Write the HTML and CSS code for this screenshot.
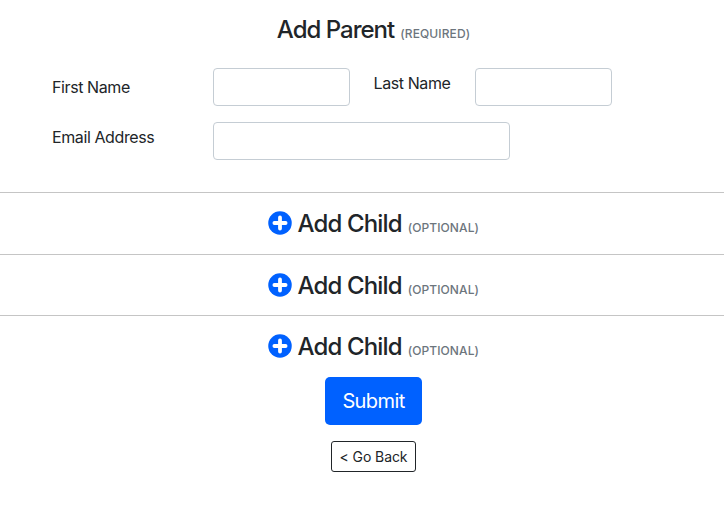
FILE: index.html
```
<!DOCTYPE html>
<html lang="en">

<head>
  <meta charset="UTF-8">
  <meta name="viewport" content="width=device-width, initial-scale=1.0">
  <title>Add Family</title>
  <link rel="stylesheet" href="styles.css">
</head>

<body>

  <form class="family-form">

    <!-- Parent -->
    <h4 class="section-title parent-title"><span>Add Parent</span> <small>(REQUIRED)</small></h4>
    <div class="parent-fields">
      <div class="form-row">
        <label class="first-label" for="firstName">First Name</label>
        <input type="text" id="firstName" class="form-control">
        <label class="last-label" for="lastName">Last Name</label>
        <input type="text" id="lastName" class="form-control">
      </div>
      <div class="form-row">
        <label class="email-label" for="email">Email Address</label>
        <input type="email" id="email" class="form-control email-control">
      </div>
    </div>

    <!-- Children -->
    <div class="child-section">
      <h4 class="section-title">
        <svg class="plus-icon" viewBox="0 0 24 24"><circle cx="12" cy="12" r="11.75"/><path d="M12 6.4v11.2M6.4 12h11.2"/></svg>
        <span>Add Child</span>
        <small>(OPTIONAL)</small>
      </h4>
    </div>
    <div class="child-section">
      <h4 class="section-title">
        <svg class="plus-icon" viewBox="0 0 24 24"><circle cx="12" cy="12" r="11.75"/><path d="M12 6.4v11.2M6.4 12h11.2"/></svg>
        <span>Add Child</span>
        <small>(OPTIONAL)</small>
      </h4>
    </div>
    <div class="child-section">
      <h4 class="section-title">
        <svg class="plus-icon" viewBox="0 0 24 24"><circle cx="12" cy="12" r="11.75"/><path d="M12 6.4v11.2M6.4 12h11.2"/></svg>
        <span>Add Child</span>
        <small>(OPTIONAL)</small>
      </h4>
    </div>

    <!-- Buttons -->
    <div class="actions">
      <button type="submit" class="btn-submit">Submit</button>
      <button type="button" class="btn-back">&lt; Go Back</button>
    </div>

  </form>

</body>

</html>
```

FILE: styles.css
```
* {
  box-sizing: border-box;
}

body {
  margin: 0;
  font-family: Inter, "Liberation Sans", sans-serif;
  font-size: 16px;
  line-height: 1.5;
  color: #212529;
  background: #fff;
}

/* Section titles */
.section-title {
  display: flex;
  justify-content: center;
  align-items: baseline;
  margin: 0;
  padding-left: 23px;
  font-size: 24px;
  font-weight: 500;
  line-height: 29px;
  letter-spacing: -0.85px;
  white-space: nowrap;
}

.section-title small {
  margin-left: 6px;
  font-size: 12px;
  font-weight: 500;
  line-height: 1;
  letter-spacing: 0.1px;
  color: #6c757d;
}

.parent-title {
  padding-top: 15px;
  letter-spacing: -1px;
}

/* Parent fields */
.parent-fields {
  display: flex;
  flex-direction: column;
  gap: 16px;
  padding: 24px 0 32px 52px;
}

.form-row {
  display: flex;
  align-items: flex-start;
  height: 38px;
}

.form-row label {
  letter-spacing: -0.4px;
  white-space: nowrap;
}

.first-label {
  width: 161px;
  padding-top: 7px;
}

.email-label {
  width: 161px;
  padding-top: 3px;
}

.last-label {
  width: 125px;
  padding: 3px 0 0 23.5px;
}

.form-control {
  width: 137px;
  height: 38px;
  padding: 6px 12px;
  font: inherit;
  border: 1px solid #c5cdd4;
  border-radius: 4px;
}

.email-control {
  width: 297px;
}

/* Child sections */
.child-section {
  height: 61.6px;
  padding-top: 16px;
  border-top: 1px solid #c5c5c5;
}

.plus-icon {
  align-self: flex-start;
  width: 24px;
  height: 24px;
  margin: 2px 5.5px 0 0;
}

.plus-icon circle {
  fill: #0061ff;
}

.plus-icon path {
  stroke: #fff;
  stroke-width: 3.8;
  stroke-linecap: round;
}

/* Buttons */
.actions {
  display: flex;
  flex-direction: column;
  align-items: center;
  gap: 16px;
  padding-left: 23px;
}

.btn-submit {
  width: 97px;
  height: 48px;
  padding: 0;
  font: inherit;
  font-size: 20px;
  letter-spacing: -0.6px;
  color: #fff;
  background: #0061ff;
  border: 0;
  border-radius: 5px;
}

.btn-back {
  width: 85px;
  height: 31px;
  padding: 0;
  font: inherit;
  font-size: 14px;
  letter-spacing: -0.1px;
  color: #212529;
  background: #fff;
  border: 1px solid #212529;
  border-radius: 3px;
}
```
